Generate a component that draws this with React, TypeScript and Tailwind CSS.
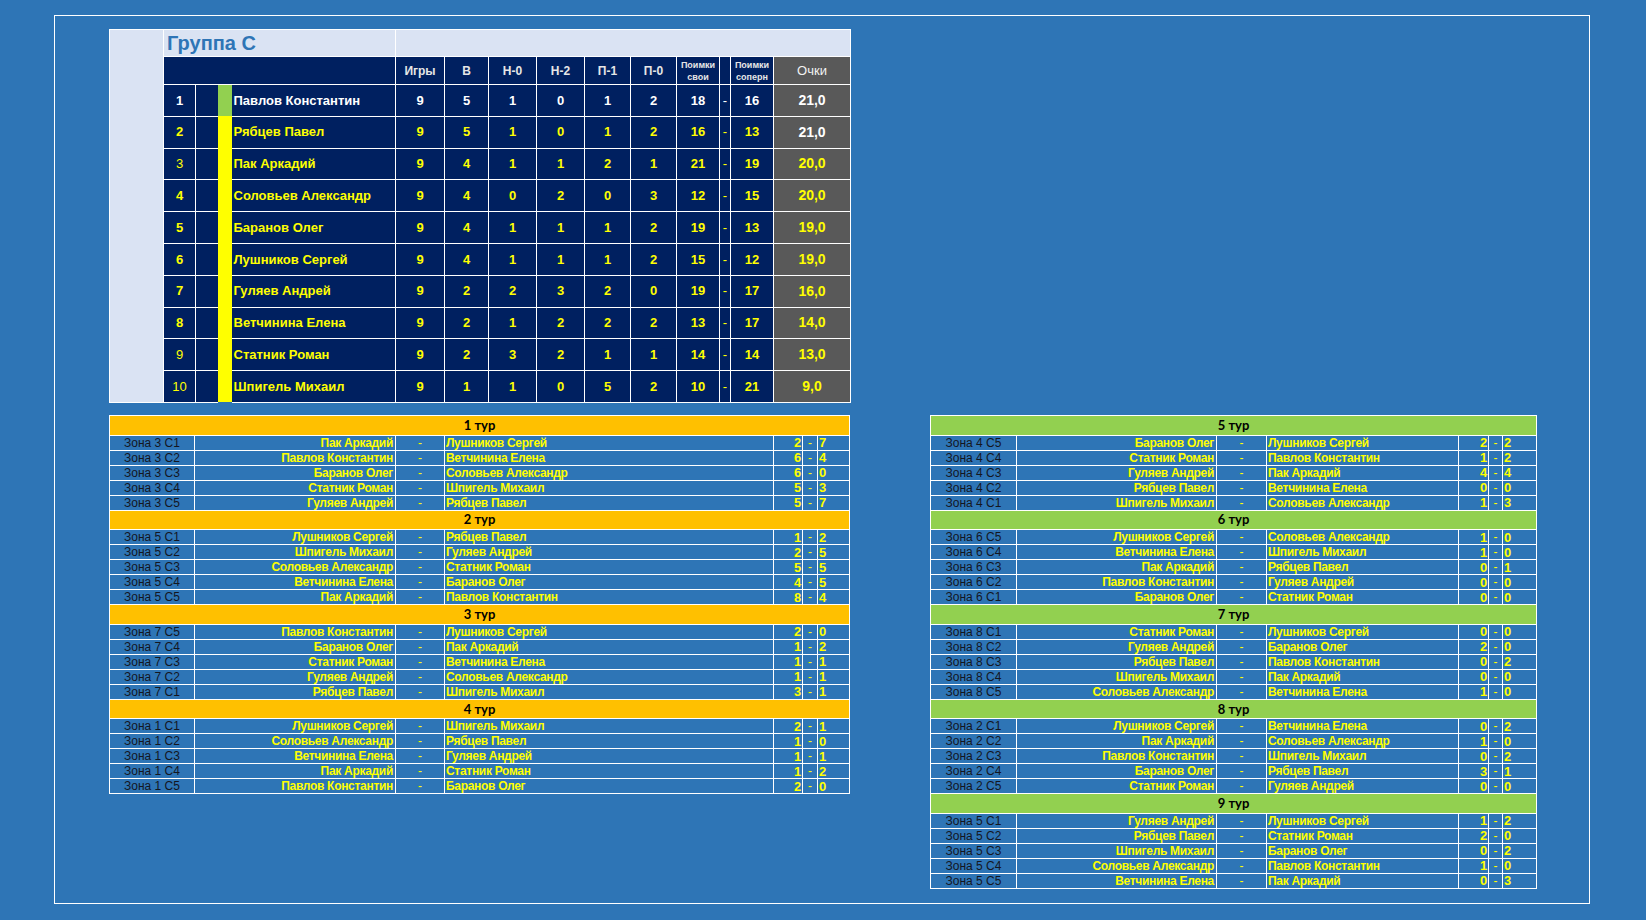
import React from "react";

type Standing = {
  rank: number;
  name: string;
  vals: number[];
  own: number;
  opp: number;
  points: string;
};

const standings: Standing[] = [
  { rank: 1, name: "Павлов Константин", vals: [9, 5, 1, 0, 1, 2], own: 18, opp: 16, points: "21,0" },
  { rank: 2, name: "Рябцев Павел", vals: [9, 5, 1, 0, 1, 2], own: 16, opp: 13, points: "21,0" },
  { rank: 3, name: "Пак Аркадий", vals: [9, 4, 1, 1, 2, 1], own: 21, opp: 19, points: "20,0" },
  { rank: 4, name: "Соловьев Александр", vals: [9, 4, 0, 2, 0, 3], own: 12, opp: 15, points: "20,0" },
  { rank: 5, name: "Баранов Олег", vals: [9, 4, 1, 1, 1, 2], own: 19, opp: 13, points: "19,0" },
  { rank: 6, name: "Лушников Сергей", vals: [9, 4, 1, 1, 1, 2], own: 15, opp: 12, points: "19,0" },
  { rank: 7, name: "Гуляев Андрей", vals: [9, 2, 2, 3, 2, 0], own: 19, opp: 17, points: "16,0" },
  { rank: 8, name: "Ветчинина Елена", vals: [9, 2, 1, 2, 2, 2], own: 13, opp: 17, points: "14,0" },
  { rank: 9, name: "Статник Роман", vals: [9, 2, 3, 2, 1, 1], own: 14, opp: 14, points: "13,0" },
  { rank: 10, name: "Шпигель Михаил", vals: [9, 1, 1, 0, 5, 2], own: 10, opp: 21, points: "9,0" },
];

type Match = [string, string, string, number, number];
type Round = { title: string; matches: Match[] };

const leftRounds: Round[] = [
  {
    title: "1 тур",
    matches: [
      ["Зона 3 С1", "Пак Аркадий", "Лушников Сергей", 2, 7],
      ["Зона 3 С2", "Павлов Константин", "Ветчинина Елена", 6, 4],
      ["Зона 3 С3", "Баранов Олег", "Соловьев Александр", 6, 0],
      ["Зона 3 С4", "Статник Роман", "Шпигель Михаил", 5, 3],
      ["Зона 3 С5", "Гуляев Андрей", "Рябцев Павел", 5, 7],
    ],
  },
  {
    title: "2 тур",
    matches: [
      ["Зона 5 С1", "Лушников Сергей", "Рябцев Павел", 1, 2],
      ["Зона 5 С2", "Шпигель Михаил", "Гуляев Андрей", 2, 5],
      ["Зона 5 С3", "Соловьев Александр", "Статник Роман", 5, 5],
      ["Зона 5 С4", "Ветчинина Елена", "Баранов Олег", 4, 5],
      ["Зона 5 С5", "Пак Аркадий", "Павлов Константин", 8, 4],
    ],
  },
  {
    title: "3 тур",
    matches: [
      ["Зона 7 С5", "Павлов Константин", "Лушников Сергей", 2, 0],
      ["Зона 7 С4", "Баранов Олег", "Пак Аркадий", 1, 2],
      ["Зона 7 С3", "Статник Роман", "Ветчинина Елена", 1, 1],
      ["Зона 7 С2", "Гуляев Андрей", "Соловьев Александр", 1, 1],
      ["Зона 7 С1", "Рябцев Павел", "Шпигель Михаил", 3, 1],
    ],
  },
  {
    title: "4 тур",
    matches: [
      ["Зона 1 С1", "Лушников Сергей", "Шпигель Михаил", 2, 1],
      ["Зона 1 С2", "Соловьев Александр", "Рябцев Павел", 1, 0],
      ["Зона 1 С3", "Ветчинина Елена", "Гуляев Андрей", 1, 1],
      ["Зона 1 С4", "Пак Аркадий", "Статник Роман", 1, 2],
      ["Зона 1 С5", "Павлов Константин", "Баранов Олег", 2, 0],
    ],
  },
];

const rightRounds: Round[] = [
  {
    title: "5 тур",
    matches: [
      ["Зона 4 С5", "Баранов Олег", "Лушников Сергей", 2, 2],
      ["Зона 4 С4", "Статник Роман", "Павлов Константин", 1, 2],
      ["Зона 4 С3", "Гуляев Андрей", "Пак Аркадий", 4, 4],
      ["Зона 4 С2", "Рябцев Павел", "Ветчинина Елена", 0, 0],
      ["Зона 4 С1", "Шпигель Михаил", "Соловьев Александр", 1, 3],
    ],
  },
  {
    title: "6 тур",
    matches: [
      ["Зона 6 С5", "Лушников Сергей", "Соловьев Александр", 1, 0],
      ["Зона 6 С4", "Ветчинина Елена", "Шпигель Михаил", 1, 0],
      ["Зона 6 С3", "Пак Аркадий", "Рябцев Павел", 0, 1],
      ["Зона 6 С2", "Павлов Константин", "Гуляев Андрей", 0, 0],
      ["Зона 6 С1", "Баранов Олег", "Статник Роман", 0, 0],
    ],
  },
  {
    title: "7 тур",
    matches: [
      ["Зона 8 С1", "Статник Роман", "Лушников Сергей", 0, 0],
      ["Зона 8 С2", "Гуляев Андрей", "Баранов Олег", 2, 0],
      ["Зона 8 С3", "Рябцев Павел", "Павлов Константин", 0, 2],
      ["Зона 8 С4", "Шпигель Михаил", "Пак Аркадий", 0, 0],
      ["Зона 8 С5", "Соловьев Александр", "Ветчинина Елена", 1, 0],
    ],
  },
  {
    title: "8 тур",
    matches: [
      ["Зона 2 С1", "Лушников Сергей", "Ветчинина Елена", 0, 2],
      ["Зона 2 С2", "Пак Аркадий", "Соловьев Александр", 1, 0],
      ["Зона 2 С3", "Павлов Константин", "Шпигель Михаил", 0, 2],
      ["Зона 2 С4", "Баранов Олег", "Рябцев Павел", 3, 1],
      ["Зона 2 С5", "Статник Роман", "Гуляев Андрей", 0, 0],
    ],
  },
  {
    title: "9 тур",
    matches: [
      ["Зона 5 С1", "Гуляев Андрей", "Лушников Сергей", 1, 2],
      ["Зона 5 С2", "Рябцев Павел", "Статник Роман", 2, 0],
      ["Зона 5 С3", "Шпигель Михаил", "Баранов Олег", 0, 2],
      ["Зона 5 С4", "Соловьев Александр", "Павлов Константин", 1, 0],
      ["Зона 5 С5", "Ветчинина Елена", "Пак Аркадий", 0, 3],
    ],
  },
];

const headers = ["Игры", "В", "Н-0", "Н-2", "П-1", "П-0"];

const StandingsTable = () => {
  const cell = "border border-white p-0 text-center";
  return (
    <table className="table-fixed border-collapse w-[741px] font-['Liberation_Sans',Arial,sans-serif]">
      <colgroup>
        <col className="w-[54px]" />
        <col className="w-[32px]" />
        <col className="w-[22px]" />
        <col className="w-[14px]" />
        <col className="w-[164px]" />
        <col className="w-[49px]" />
        <col className="w-[44px]" />
        <col className="w-[48px]" />
        <col className="w-[48px]" />
        <col className="w-[46px]" />
        <col className="w-[46px]" />
        <col className="w-[43px]" />
        <col className="w-[11px]" />
        <col className="w-[43px]" />
        <col className="w-[77px]" />
      </colgroup>
      <tbody>
        <tr className="h-[27px]">
          <td rowSpan={12} className="border border-white bg-[#dae3f3] p-0" />
          <td colSpan={4} className="border border-white bg-[#dae3f3] px-[3px] py-0 text-left text-[20px] font-bold leading-none text-[#2e75b6]">
            Группа С
          </td>
          <td colSpan={10} className="border border-white bg-[#dae3f3] p-0" />
        </tr>
        <tr className="h-[28px] bg-[#002060] text-[12px] font-bold text-[#e6e6e6]">
          <td colSpan={4} className="border border-white p-0" />
          {headers.map((h) => (
            <td key={h} className={cell}>
              {h}
            </td>
          ))}
          <td className={`${cell} text-[9px] leading-[12px]`}>
            Поимки
            <br />
            свои
          </td>
          <td className={cell} />
          <td className={`${cell} text-[9px] leading-[12px]`}>
            Поимки
            <br />
            соперн
          </td>
          <td className={`${cell} bg-[#595959] text-[13px] font-normal text-[#f2f2f2]`}>Очки</td>
        </tr>
        {standings.map((s, i) => {
          const first = i === 0;
          const color = first ? "text-white" : "text-[#ffff00]";
          const ptsColor = i < 2 ? "text-white" : "text-[#ffff00]";
          const thinRank = s.rank === 3 || s.rank >= 9;
          return (
            <tr key={s.rank} className={`h-[31.8px] bg-[#002060] text-[13px] font-bold ${color}`}>
              <td className={`${cell} ${thinRank ? "font-normal" : ""}`}>{s.rank}</td>
              <td className={cell} />
              <td
                className={`border border-white p-0 ${first ? "bg-[#92d050]" : "bg-[#ffff00]"} [border-left-style:hidden] [border-right-style:hidden] [border-bottom-style:hidden] ${
                  first ? "" : "[border-top-style:hidden]"
                }`}
              />
              <td className="border border-white px-[2px] py-0 text-left">{s.name}</td>
              {s.vals.map((v, j) => (
                <td key={j} className={cell}>
                  {v}
                </td>
              ))}
              <td className={cell}>{s.own}</td>
              <td className={`${cell} font-normal`}>-</td>
              <td className={cell}>{s.opp}</td>
              <td className={`${cell} bg-[#595959] text-[14px] ${ptsColor}`}>{s.points}</td>
            </tr>
          );
        })}
      </tbody>
    </table>
  );
};

type MatchTableProps = {
  rounds: Round[];
  headBg: string;
  widths: string[];
  tableWidth: string;
};

const MatchTable = ({ rounds, headBg, widths, tableWidth }: MatchTableProps) => {
  const td = "border border-white py-0 leading-none whitespace-nowrap overflow-hidden";
  const name = "font-bold text-[12px] tracking-[-0.3px] text-[#ffff00]";
  return (
    <table className={`table-fixed border-collapse ${tableWidth} font-['Liberation_Sans',Arial,sans-serif]`}>
      <colgroup>
        {widths.map((w, i) => (
          <col key={i} className={w} />
        ))}
      </colgroup>
      <tbody>
        {rounds.map((r) => (
          <React.Fragment key={r.title}>
            <tr className="h-[19.6px]">
              <td
                colSpan={7}
                className={`border border-white p-0 text-center text-[13px] font-bold leading-none text-black font-['Lato',sans-serif] ${headBg}`}
              >
                {r.title}
              </td>
            </tr>
            {r.matches.map((m) => (
              <tr key={m[0] + m[1]} className="h-[15px] bg-[#2e75b6]">
                <td className={`${td} px-0 text-center text-[12px] text-[#14161f]`}>{m[0]}</td>
                <td className={`${td} pl-0 pr-[2px] text-right ${name}`}>{m[1]}</td>
                <td className={`${td} px-0 text-center text-[12px] text-[#ffff00]`}>-</td>
                <td className={`${td} pl-[1px] pr-0 text-left ${name}`}>{m[2]}</td>
                <td className={`${td} pl-0 pr-[1px] text-right ${name} text-[13px]`}>{m[3]}</td>
                <td className={`${td} px-0 text-center text-[12px] text-[#ffff00]`}>-</td>
                <td className={`${td} pl-[1px] pr-0 text-left ${name} text-[13px]`}>{m[4]}</td>
              </tr>
            ))}
          </React.Fragment>
        ))}
      </tbody>
    </table>
  );
};

export default function App() {
  return (
    <div className="h-[920px] w-[1646px] overflow-hidden bg-[#2e75b6] pt-[15px] pl-[54px]">
      <div className="h-[889px] w-[1536px] border border-white pt-[13px] pl-[54px]">
        <div className="grid grid-cols-[741px_auto] gap-y-[12px]">
          <div className="col-span-2">
            <StandingsTable />
          </div>
          <div>
            <MatchTable
              rounds={leftRounds}
              headBg="bg-[#ffc000]"
              tableWidth="w-[740px]"
              widths={["w-[85px]", "w-[201px]", "w-[49px]", "w-[329px]", "w-[29px]", "w-[15px]", "w-[32px]"]}
            />
          </div>
          <div className="pl-[80px]">
            <MatchTable
              rounds={rightRounds}
              headBg="bg-[#92d050]"
              tableWidth="w-[606px]"
              widths={["w-[86px]", "w-[200px]", "w-[50px]", "w-[192px]", "w-[30px]", "w-[14px]", "w-[34px]"]}
            />
          </div>
        </div>
      </div>
    </div>
  );
}
